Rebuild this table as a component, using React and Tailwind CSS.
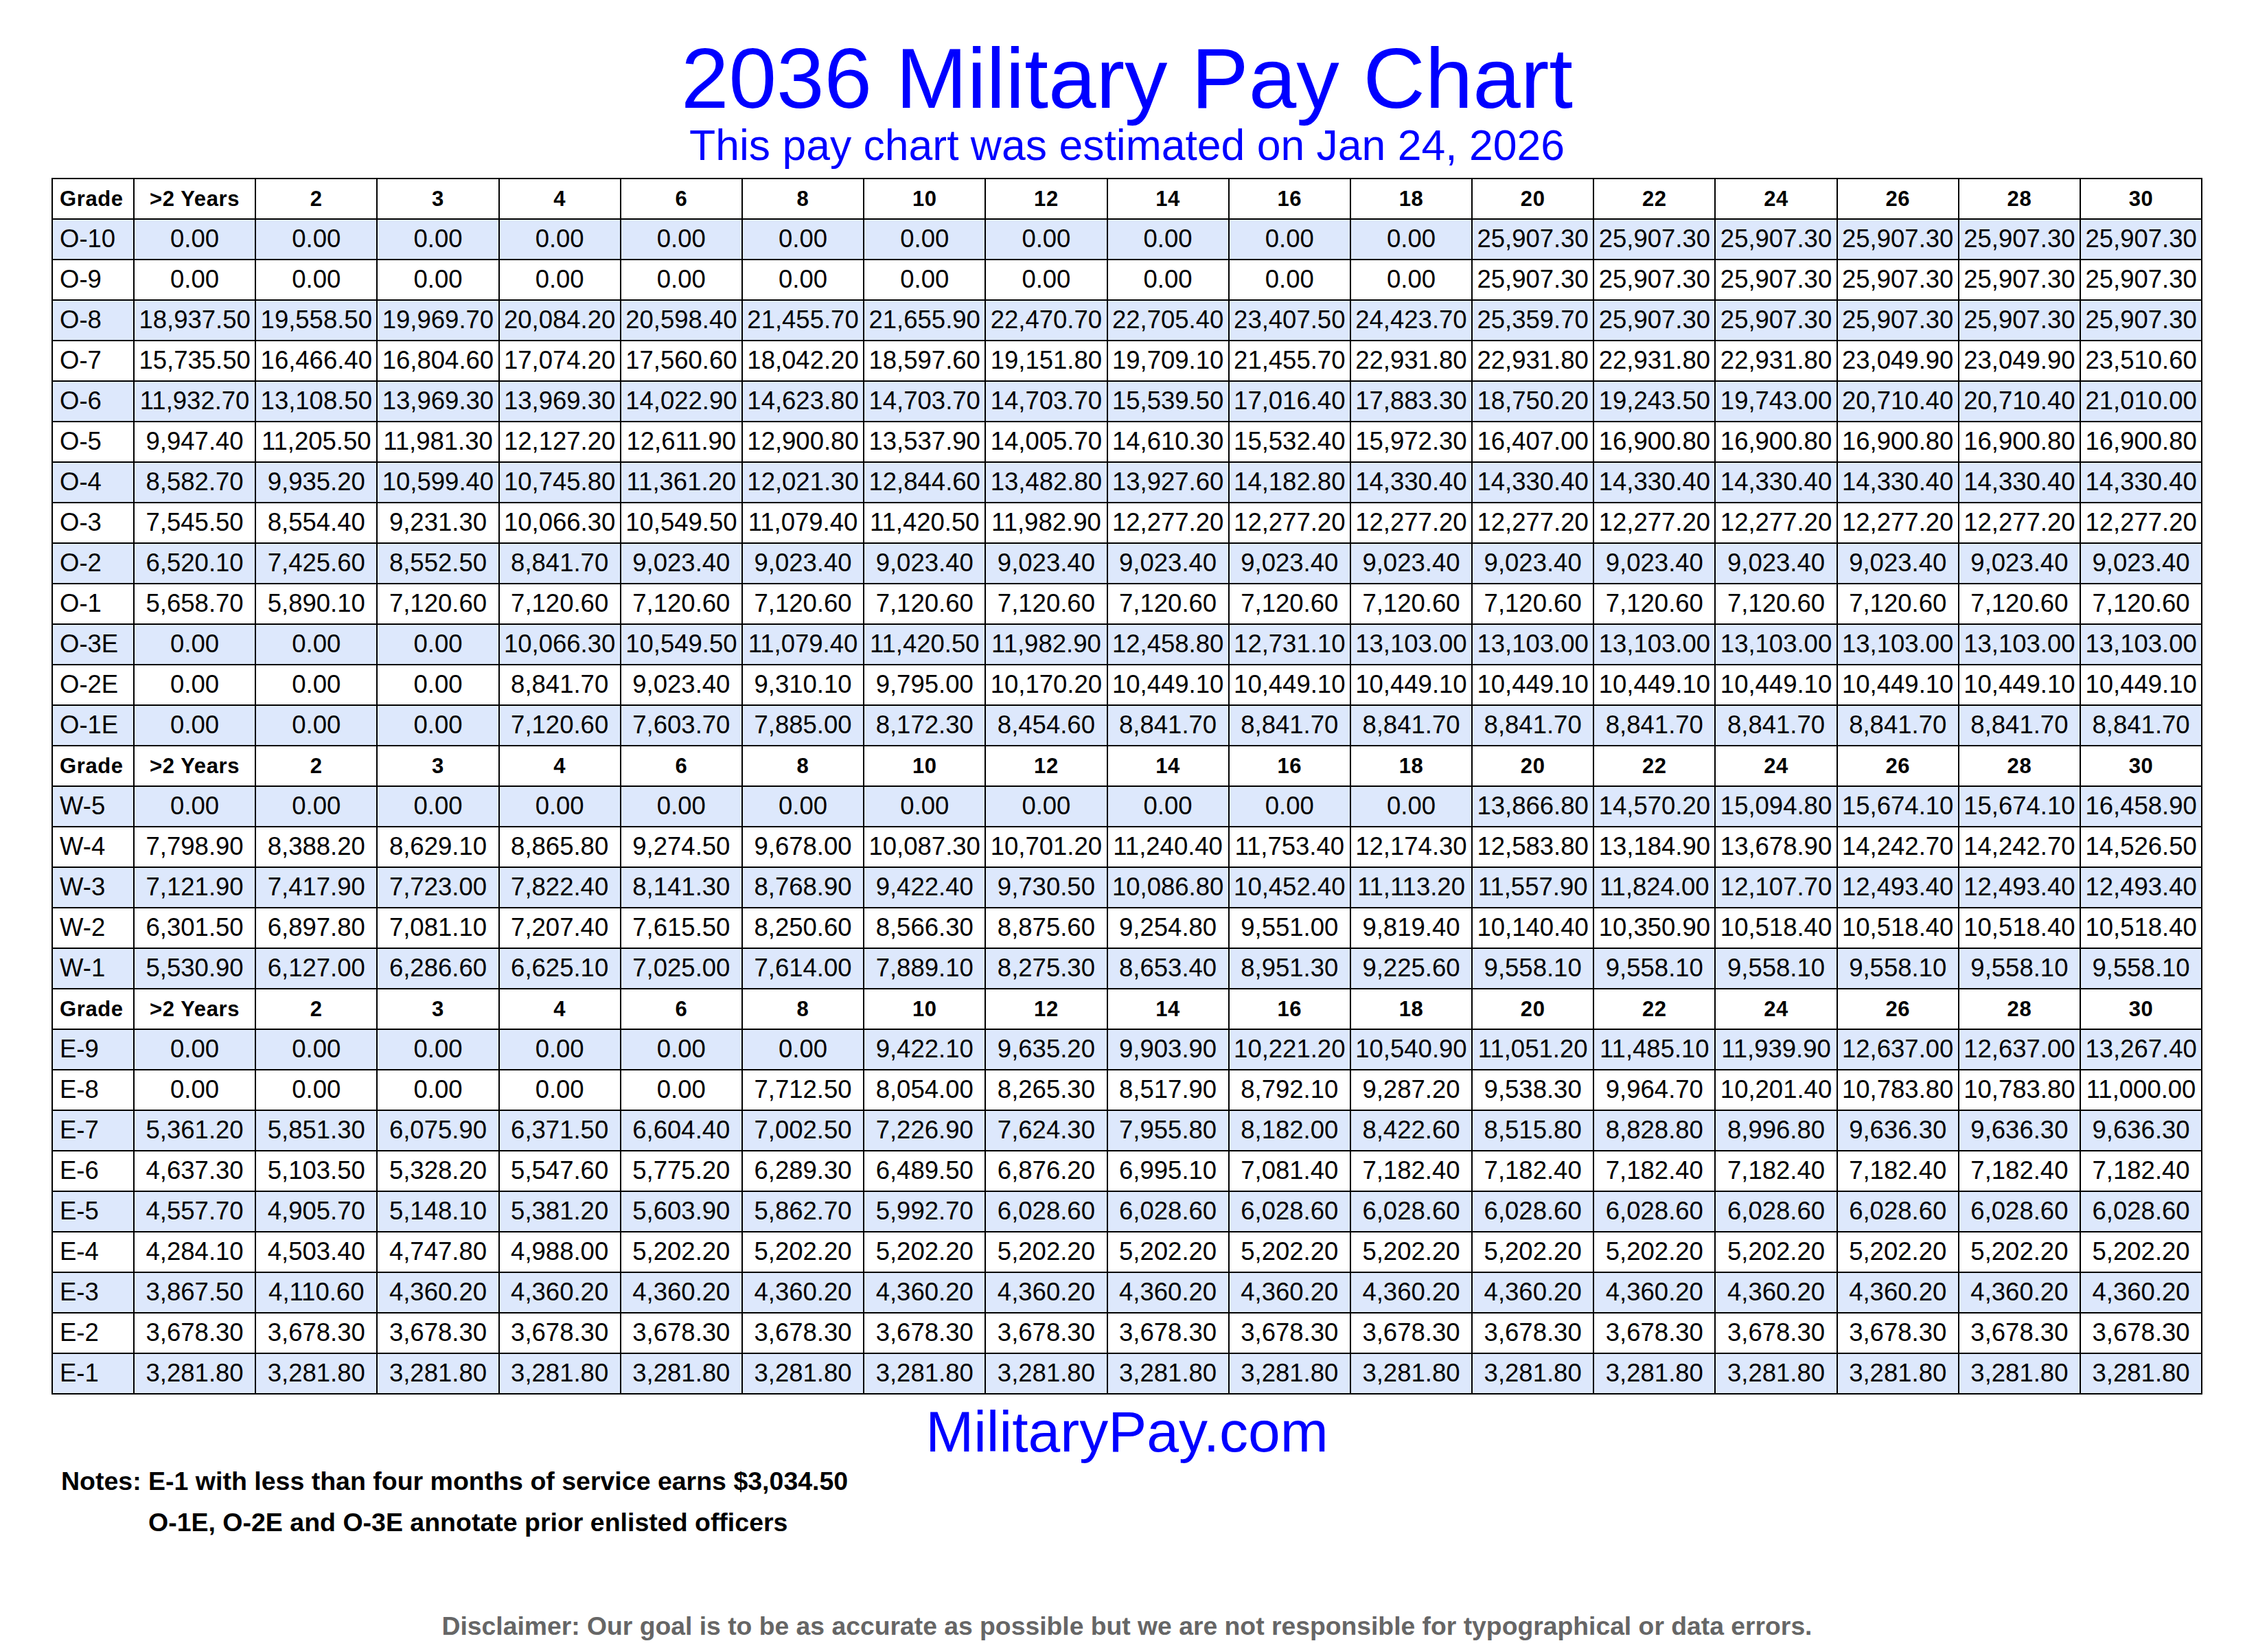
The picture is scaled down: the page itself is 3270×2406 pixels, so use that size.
import React from "react";

const HEAD = ["Grade", ">2 Years", "2", "3", "4", "6", "8", "10", "12", "14", "16", "18", "20", "22", "24", "26", "28", "30"];

const rep = (v, n) => Array(n).fill(v);

const O_ROWS = [
  ["O-10", [...rep("0.00", 11), ...rep("25,907.30", 6)]],
  ["O-9", [...rep("0.00", 11), ...rep("25,907.30", 6)]],
  ["O-8", ["18,937.50", "19,558.50", "19,969.70", "20,084.20", "20,598.40", "21,455.70", "21,655.90", "22,470.70", "22,705.40", "23,407.50", "24,423.70", "25,359.70", ...rep("25,907.30", 5)]],
  ["O-7", ["15,735.50", "16,466.40", "16,804.60", "17,074.20", "17,560.60", "18,042.20", "18,597.60", "19,151.80", "19,709.10", "21,455.70", "22,931.80", "22,931.80", "22,931.80", "22,931.80", "23,049.90", "23,049.90", "23,510.60"]],
  ["O-6", ["11,932.70", "13,108.50", "13,969.30", "13,969.30", "14,022.90", "14,623.80", "14,703.70", "14,703.70", "15,539.50", "17,016.40", "17,883.30", "18,750.20", "19,243.50", "19,743.00", "20,710.40", "20,710.40", "21,010.00"]],
  ["O-5", ["9,947.40", "11,205.50", "11,981.30", "12,127.20", "12,611.90", "12,900.80", "13,537.90", "14,005.70", "14,610.30", "15,532.40", "15,972.30", "16,407.00", ...rep("16,900.80", 5)]],
  ["O-4", ["8,582.70", "9,935.20", "10,599.40", "10,745.80", "11,361.20", "12,021.30", "12,844.60", "13,482.80", "13,927.60", "14,182.80", ...rep("14,330.40", 7)]],
  ["O-3", ["7,545.50", "8,554.40", "9,231.30", "10,066.30", "10,549.50", "11,079.40", "11,420.50", "11,982.90", ...rep("12,277.20", 9)]],
  ["O-2", ["6,520.10", "7,425.60", "8,552.50", "8,841.70", ...rep("9,023.40", 13)]],
  ["O-1", ["5,658.70", "5,890.10", ...rep("7,120.60", 15)]],
  ["O-3E", [...rep("0.00", 3), "10,066.30", "10,549.50", "11,079.40", "11,420.50", "11,982.90", "12,458.80", "12,731.10", ...rep("13,103.00", 7)]],
  ["O-2E", [...rep("0.00", 3), "8,841.70", "9,023.40", "9,310.10", "9,795.00", "10,170.20", ...rep("10,449.10", 9)]],
  ["O-1E", [...rep("0.00", 3), "7,120.60", "7,603.70", "7,885.00", "8,172.30", "8,454.60", ...rep("8,841.70", 9)]],
];

const W_ROWS = [
  ["W-5", [...rep("0.00", 11), "13,866.80", "14,570.20", "15,094.80", "15,674.10", "15,674.10", "16,458.90"]],
  ["W-4", ["7,798.90", "8,388.20", "8,629.10", "8,865.80", "9,274.50", "9,678.00", "10,087.30", "10,701.20", "11,240.40", "11,753.40", "12,174.30", "12,583.80", "13,184.90", "13,678.90", "14,242.70", "14,242.70", "14,526.50"]],
  ["W-3", ["7,121.90", "7,417.90", "7,723.00", "7,822.40", "8,141.30", "8,768.90", "9,422.40", "9,730.50", "10,086.80", "10,452.40", "11,113.20", "11,557.90", "11,824.00", "12,107.70", "12,493.40", "12,493.40", "12,493.40"]],
  ["W-2", ["6,301.50", "6,897.80", "7,081.10", "7,207.40", "7,615.50", "8,250.60", "8,566.30", "8,875.60", "9,254.80", "9,551.00", "9,819.40", "10,140.40", "10,350.90", ...rep("10,518.40", 4)]],
  ["W-1", ["5,530.90", "6,127.00", "6,286.60", "6,625.10", "7,025.00", "7,614.00", "7,889.10", "8,275.30", "8,653.40", "8,951.30", "9,225.60", ...rep("9,558.10", 6)]],
];

const E_ROWS = [
  ["E-9", [...rep("0.00", 6), "9,422.10", "9,635.20", "9,903.90", "10,221.20", "10,540.90", "11,051.20", "11,485.10", "11,939.90", "12,637.00", "12,637.00", "13,267.40"]],
  ["E-8", [...rep("0.00", 5), "7,712.50", "8,054.00", "8,265.30", "8,517.90", "8,792.10", "9,287.20", "9,538.30", "9,964.70", "10,201.40", "10,783.80", "10,783.80", "11,000.00"]],
  ["E-7", ["5,361.20", "5,851.30", "6,075.90", "6,371.50", "6,604.40", "7,002.50", "7,226.90", "7,624.30", "7,955.80", "8,182.00", "8,422.60", "8,515.80", "8,828.80", "8,996.80", "9,636.30", "9,636.30", "9,636.30"]],
  ["E-6", ["4,637.30", "5,103.50", "5,328.20", "5,547.60", "5,775.20", "6,289.30", "6,489.50", "6,876.20", "6,995.10", "7,081.40", ...rep("7,182.40", 7)]],
  ["E-5", ["4,557.70", "4,905.70", "5,148.10", "5,381.20", "5,603.90", "5,862.70", "5,992.70", ...rep("6,028.60", 10)]],
  ["E-4", ["4,284.10", "4,503.40", "4,747.80", "4,988.00", ...rep("5,202.20", 13)]],
  ["E-3", ["3,867.50", "4,110.60", ...rep("4,360.20", 15)]],
  ["E-2", rep("3,678.30", 17)],
  ["E-1", rep("3,281.80", 17)],
];

function HeaderRow() {
  return HEAD.map((h, i) => (
    <div
      key={"h" + i}
      className={
        "flex items-center bg-white text-[31px] font-bold tracking-[0.6px] text-black " +
        (i === 0 ? "justify-start pl-[10px]" : "justify-center")
      }
    >
      {h}
    </div>
  ));
}

function DataRows({ rows }) {
  return rows.map(([grade, vals], r) => {
    const bg = r % 2 === 0 ? "bg-[#dde8fc]" : "bg-white";
    return (
      <React.Fragment key={grade}>
        <div className={"flex items-center justify-start pl-[10px] text-[36.5px] text-black " + bg}>{grade}</div>
        {vals.map((v, i) => (
          <div key={grade + i} className={"flex items-center justify-center whitespace-nowrap text-[36.5px] text-black " + bg}>
            {v}
          </div>
        ))}
      </React.Fragment>
    );
  });
}

export default function App() {
  return (
    <div className="w-[3270px] h-[2406px] bg-white font-['Liberation_Sans',Arial,sans-serif]">
      <div className="ml-[75px] w-[3133px] pt-[51px] flex flex-col">
        <div className="text-center text-[125px] leading-none text-[#0000ff]">2036 Military Pay Chart</div>
        <div className="mt-[4px] text-center text-[62.5px] leading-none text-[#0000ff]">
          This pay chart was estimated on Jan 24, 2026
        </div>
        <div className="mt-[16.5px] grid grid-cols-[117px_repeat(17,175.2px)] auto-rows-[57px] gap-[2px] bg-black p-[2px] leading-none">
          <HeaderRow />
          <DataRows rows={O_ROWS} />
          <HeaderRow />
          <DataRows rows={W_ROWS} />
          <HeaderRow />
          <DataRows rows={E_ROWS} />
        </div>
        <div className="mt-[12px] text-center text-[84px] leading-none text-[#0000ff]">MilitaryPay.com</div>
        <div className="mt-[12px] pl-[14px] text-[37.5px] font-bold leading-none text-black">
          Notes: E-1 with less than four months of service earns $3,034.50
        </div>
        <div className="mt-[22px] pl-[141px] text-[37.5px] font-bold leading-none text-black">
          O-1E, O-2E and O-3E annotate prior enlisted officers
        </div>
        <div className="mt-[114px] text-center text-[37.3px] font-bold leading-none text-[#666666]">
          Disclaimer: Our goal is to be as accurate as possible but we are not responsible for typographical or data errors.
        </div>
      </div>
    </div>
  );
}
